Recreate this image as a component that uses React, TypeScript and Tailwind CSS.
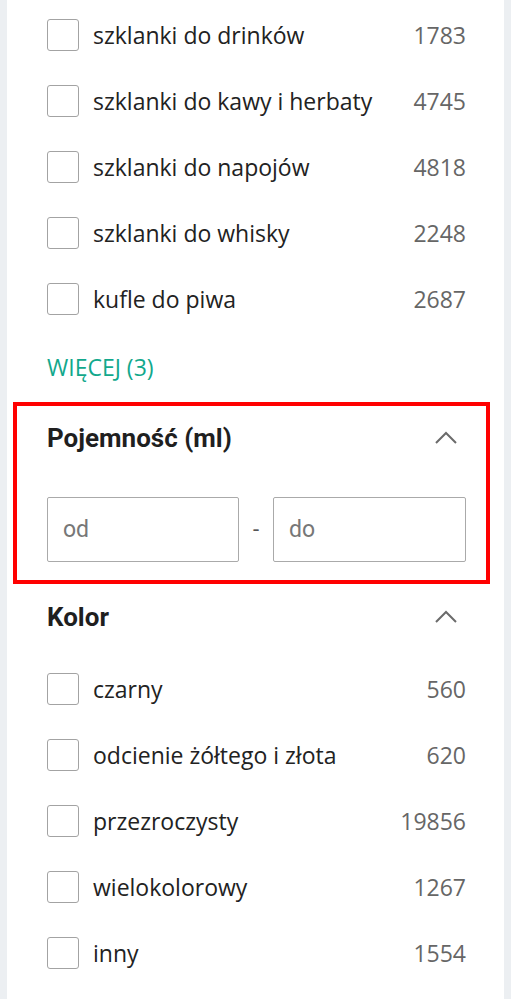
import React from 'react'

interface Option {
  label: string
  count: number
}

const typeOptions: Option[] = [
  { label: 'szklanki do drinków', count: 1783 },
  { label: 'szklanki do kawy i herbaty', count: 4745 },
  { label: 'szklanki do napojów', count: 4818 },
  { label: 'szklanki do whisky', count: 2248 },
  { label: 'kufle do piwa', count: 2687 },
]

const colorOptions: Option[] = [
  { label: 'czarny', count: 560 },
  { label: 'odcienie żółtego i złota', count: 620 },
  { label: 'przezroczysty', count: 19856 },
  { label: 'wielokolorowy', count: 1267 },
  { label: 'inny', count: 1554 },
]

const ChevronUp = () => (
  <svg width="24" height="14" viewBox="0 0 24 14" fill="none" className="mr-[8px]">
    <path d="M2 12 L12 2 L22 12" stroke="#6b6b6b" strokeWidth="2" />
  </svg>
)

function OptionList({ options }: { options: Option[] }) {
  return (
    <div className="flex flex-col gap-[34px]">
      {options.map((o) => (
        <label key={o.label} className="flex items-center h-[32px]">
          <span className="w-[32px] h-[32px] rounded-[3px] border-[1.5px] border-[#a3a3a3] bg-white shrink-0" />
          <span className="ml-[14px] flex-1 text-[23px] text-[#222]">{o.label}</span>
          <span className="text-[23px] text-[#666]">{o.count}</span>
        </label>
      ))}
    </div>
  )
}

function SectionHeader({ title }: { title: string }) {
  return (
    <div className="flex items-center justify-between h-[28px]">
      <h3 className="text-[26px] font-bold text-[#1f1f1f] font-['Roboto',sans-serif]">{title}</h3>
      <ChevronUp />
    </div>
  )
}

export default function App() {
  return (
    <div className="min-h-screen bg-[#eceff2] pl-[7px] pr-[7px] font-['Open_Sans',sans-serif]">
      <div className="bg-white min-h-[999px] pl-[40px] pr-[38px] pt-[19px]">
        <OptionList options={typeOptions} />

        <button className="mt-[40px] h-[24px] flex items-center text-[23px] text-[#12a88c] leading-none">
          WIĘCEJ (3)
        </button>

        <div className="mt-[23px] -ml-[34px] -mr-[24px] border-4 border-[#ff0000] pl-[30px] pr-[20px] pt-[18px] pb-[18px]">
          <SectionHeader title="Pojemność (ml)" />
          <div className="mt-[45px] flex items-center">
            <input
              placeholder="od"
              className="w-[192px] h-[65px] border border-[#aaa] rounded-[2px] pl-[15px] text-[23px] font-['Roboto',sans-serif] placeholder:text-[#777] outline-none"
            />
            <span className="flex-1 text-center text-[22px] text-[#555] font-['Roboto',sans-serif]">-</span>
            <input
              placeholder="do"
              className="w-[193px] h-[65px] border border-[#aaa] rounded-[2px] pl-[15px] text-[23px] font-['Roboto',sans-serif] placeholder:text-[#777] outline-none"
            />
          </div>
        </div>

        <div className="mt-[19px]">
          <SectionHeader title="Kolor" />
        </div>
        <div className="mt-[42px]">
          <OptionList options={colorOptions} />
        </div>
      </div>
    </div>
  )
}
